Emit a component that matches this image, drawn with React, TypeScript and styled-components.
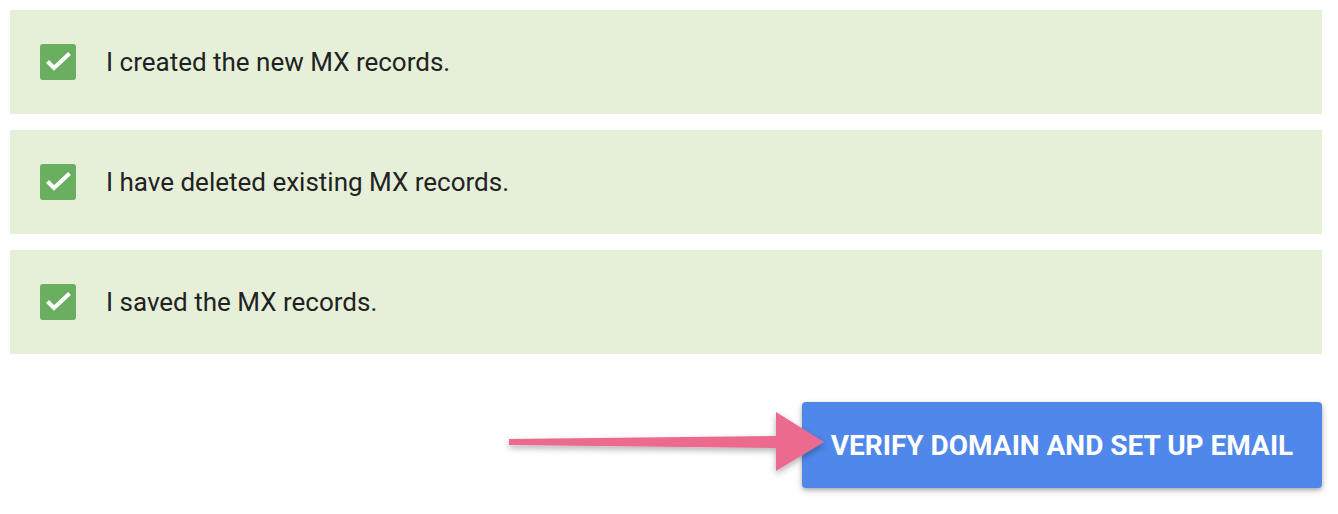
import React from "react";
import styled, { createGlobalStyle } from "styled-components";

const Global = createGlobalStyle`
  html, body { margin: 0; padding: 0; background: #ffffff; }
  body { font-family: Roboto, "Noto Sans", Arial, sans-serif; }
`;

const Page = styled.div`
  padding: 10px 16px 10px 10px;
  display: flex;
  flex-direction: column;
`;

const List = styled.div`
  display: flex;
  flex-direction: column;
  gap: 16px;
`;

const Row = styled.label`
  height: 104px;
  background: #e6f0d8;
  display: flex;
  align-items: center;
  padding-left: 30px;
  gap: 30px;
`;

const Box = styled.span`
  width: 36px;
  height: 36px;
  border-radius: 3px;
  background: #6aae5f;
  display: block;
  flex: none;
`;

const Label = styled.span`
  font-family: Roboto, Arial, sans-serif;
  font-size: 26px;
  color: #222222;
`;

const Actions = styled.div`
  margin-top: 48px;
  display: flex;
  justify-content: flex-end;
`;

const ButtonWrap = styled.div`
  position: relative;
`;

const Button = styled.button`
  width: 520px;
  height: 86px;
  border: none;
  border-radius: 4px;
  background: #5087ea;
  color: #ffffff;
  font-family: Roboto, Arial, sans-serif;
  font-weight: 700;
  font-size: 28px;
  text-transform: uppercase;
  padding: 0;
  box-shadow: 0 2px 4px rgba(0, 0, 0, 0.25), 0 3px 8px rgba(0, 0, 0, 0.12);
  cursor: pointer;
`;

const Arrow = styled.svg`
  position: absolute;
  left: -300px;
  top: 4px;
  overflow: visible;
`;

const Check = () => (
  <svg width="36" height="36" viewBox="0 0 36 36">
    <path d="M7.5 17.5 L14 24 L29.5 9.5" fill="none" stroke="#ffffff" strokeWidth="4" strokeLinecap="butt" strokeLinejoin="miter" />
  </svg>
);

const items = [
  "I created the new MX records.",
  "I have deleted existing MX records.",
  "I saved the MX records.",
];

export default function App() {
  return (
    <Page>
      <Global />
      <List>
        {items.map((t) => (
          <Row key={t}>
            <Box><Check /></Box>
            <Label>{t}</Label>
          </Row>
        ))}
      </List>
      <Actions>
        <ButtonWrap>
          <Button>Verify domain and set up email</Button>
          <Arrow width="330" height="72" viewBox="0 0 330 72">
            <defs>
              <filter id="sh" x="-10%" y="-30%" width="130%" height="180%">
                <feDropShadow dx="0" dy="3" stdDeviation="3" floodColor="#000" floodOpacity="0.3" />
              </filter>
            </defs>
            <g filter="url(#sh)">
              <polygon points="7,33 274,30 274,42 7,39" fill="#ec6a8e" />
              <polygon points="274,6 322,36 274,65" fill="#ec6a8e" />
            </g>
          </Arrow>
        </ButtonWrap>
      </Actions>
    </Page>
  );
}
